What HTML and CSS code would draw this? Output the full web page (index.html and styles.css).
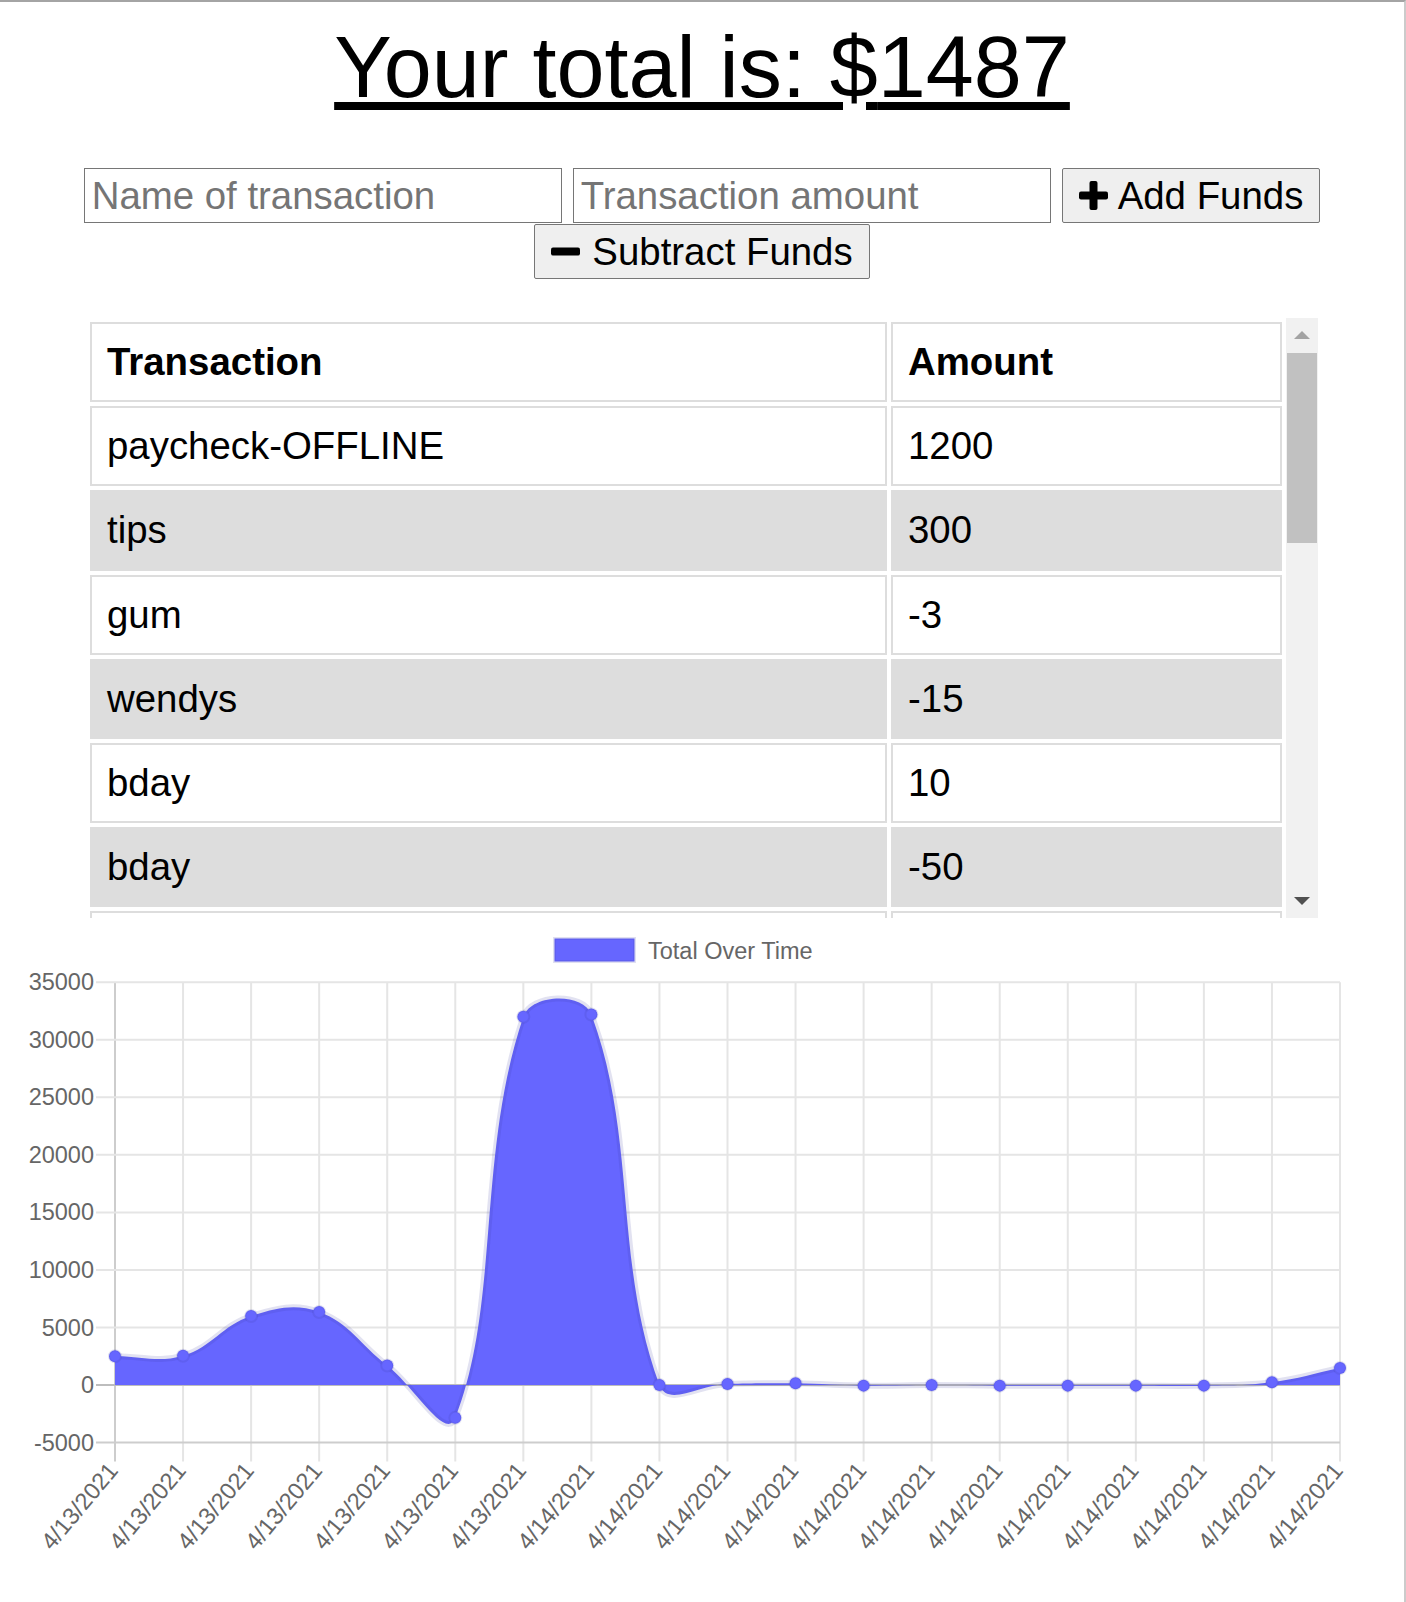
FILE: index.html
```html
<!DOCTYPE html>
<html lang="en">
<head>
<meta charset="utf-8">
<title>Budget Tracker</title>
<link rel="stylesheet" href="styles.css">
</head>
<body>
<h1 class="total">Your total is: $<span id="total">1487</span></h1>

<form class="entry">
  <input class="field" type="text" placeholder="Name of transaction">
  <input class="field" type="number" placeholder="Transaction amount">
  <button class="btn" type="button"><svg class="ico" viewBox="0 0 29 29" aria-hidden="true"><rect x="10.5" y="0" width="8" height="29" rx="2"/><rect x="0" y="10.5" width="29" height="8" rx="2"/></svg>Add Funds</button>
  <button class="btn btn-sub" type="button"><svg class="ico" viewBox="0 0 29 29" aria-hidden="true"><rect x="0" y="10.5" width="29" height="8" rx="2"/></svg>Subtract Funds</button>
</form>

<div class="ledger">
  <div class="ledger-view">
    <table class="tx">
      <thead>
        <tr><th class="col-name">Transaction</th><th>Amount</th></tr>
      </thead>
      <tbody>
        <tr><td>paycheck-OFFLINE</td><td>1200</td></tr>
        <tr><td>tips</td><td>300</td></tr>
        <tr><td>gum</td><td>-3</td></tr>
        <tr><td>wendys</td><td>-15</td></tr>
        <tr><td>bday</td><td>10</td></tr>
        <tr><td>bday</td><td>-50</td></tr>
        <tr><td>&nbsp;</td><td>&nbsp;</td></tr>
      </tbody>
    </table>
  </div>
  <div class="scrollbar" aria-hidden="true">
    <div class="sb-btn sb-up"></div>
    <div class="sb-track"><div class="sb-thumb"></div></div>
    <div class="sb-btn sb-down"></div>
  </div>
</div>

<div class="chart-wrap">
  <svg id="chart" class="chart" width="1388" height="660" viewBox="8 918 1388 660">
    <g id="plot"></g>
    <g class="legend">
      <rect class="legend-box" x="554.5" y="938.5" width="80" height="23"/>
      <text class="legend-label" x="648" y="950.5">Total Over Time</text>
    </g>
  </svg>
</div>

<script src="script.js"></script>
</body>
</html>
```

FILE: styles.css
```css
html {
  border-top: 2px solid #a4a4a4;
  border-right: 2px solid #cbcbcb;
  min-height: 100%;
  box-sizing: border-box;
  background: #fff;
}

body {
  margin: 8px;
  font-family: "Liberation Sans", Arial, Helvetica, sans-serif;
  color: #000;
}

.total {
  margin: 8px 0 51px;
  font-size: 86.3px;
  font-weight: 400;
  line-height: 99px;
  text-align: center;
  text-decoration: underline;
}

.entry {
  display: flex;
  flex-wrap: wrap;
  justify-content: center;
  gap: 1px 11px;
  margin: 0;
}

.field {
  width: 478px;
  height: 55px;
  box-sizing: border-box;
  margin: 0;
  padding: 0 7px;
  border: 1px solid #767676;
  border-radius: 0;
  background: #fff;
  color: #000;
  font-family: "Liberation Sans", Arial, Helvetica, sans-serif;
  font-size: 38.4px;
}

.field::placeholder {
  color: #757575;
}

.btn {
  display: inline-flex;
  align-items: center;
  gap: 10px;
  height: 55px;
  box-sizing: border-box;
  margin: 0;
  padding: 0 16px;
  border: 1px solid #767676;
  border-radius: 2px;
  background: #efefef;
  color: #000;
  font-family: "Liberation Sans", Arial, Helvetica, sans-serif;
  font-size: 38.4px;
  white-space: nowrap;
}

.btn-sub {
  gap: 12px;
}

.ico {
  width: 29px;
  height: 29px;
  flex: none;
  fill: #000;
}

.ledger {
  display: flex;
  width: 1232px;
  height: 600px;
  margin: 39px auto 0;
}

.ledger-view {
  flex: 1;
  overflow: hidden;
}

.tx {
  width: 100%;
  table-layout: fixed;
  border-collapse: separate;
  border-spacing: 4px;
}

.tx th,
.tx td {
  padding: 16px 16px 16px 15px;
  border: 2px solid #dddddd;
  font-size: 38.4px;
  line-height: 44.2px;
  text-align: left;
}

.tx th {
  font-weight: 700;
}

.col-name {
  width: 762px;
}

.tx tbody tr:nth-child(even) td {
  background: #dddddd;
}

.scrollbar {
  display: flex;
  flex-direction: column;
  width: 32px;
  flex: none;
  background: #f1f1f1;
}

.sb-btn {
  display: flex;
  align-items: center;
  justify-content: center;
  height: 34px;
  flex: none;
}

.sb-up::before {
  content: "";
  border-left: 8px solid transparent;
  border-right: 8px solid transparent;
  border-bottom: 8px solid #a3a3a3;
}

.sb-down::before {
  content: "";
  border-left: 8px solid transparent;
  border-right: 8px solid transparent;
  border-top: 8px solid #505050;
}

.sb-track {
  flex: 1;
}

.sb-thumb {
  height: 190px;
  margin: 1px 1px 0;
  background: #c1c1c1;
}

.chart-wrap {
  width: 1388px;
}

.chart {
  display: block;
}

.chart text {
  font-family: "Liberation Sans", Arial, Helvetica, sans-serif;
  font-size: 23.5px;
  fill: #666666;
}

.ytick {
  text-anchor: end;
  dominant-baseline: central;
}

.xtick {
  text-anchor: end;
  dominant-baseline: central;
}

.legend-label {
  dominant-baseline: central;
}

.legend-box {
  fill: #6666ff;
  stroke: rgba(60, 60, 160, 0.16);
  stroke-width: 3;
}

.grid line {
  stroke-width: 2;
}

.grid .line {
  stroke: #e5e5e5;
}

.grid .axis {
  stroke: #cdcdcd;
}

.grid .zero {
  stroke: #bdbdbd;
}

.area {
  fill: #6666ff;
  stroke: none;
}

.curve {
  fill: none;
  stroke: rgba(60, 60, 160, 0.15);
  stroke-width: 6;
}

.dot {
  fill: #6666ff;
  stroke: rgba(60, 60, 160, 0.15);
  stroke-width: 2;
}
```

FILE: script.js
```js
(function () {
  var NS = 'http://www.w3.org/2000/svg';
  var plot = document.getElementById('plot');
  if (!plot) return;

  var labels = [];
  var i;
  for (i = 0; i < 7; i++) labels.push('4/13/2021');
  for (i = 0; i < 12; i++) labels.push('4/14/2021');

  var data = [2500, 2550, 6000, 6350, 1700, -2850, 32000, 32200, 0, 100, 150, -50, 0, -50, -50, -50, -50, 250, 1487];

  var area = { left: 115, right: 1340, top: 982.2, bottom: 1442.6 };
  var max = 35000, min = -5000, step = 5000;

  function yOf(v) { return area.top + (max - v) / (max - min) * (area.bottom - area.top); }
  function xOf(n) { return area.left + n * (area.right - area.left) / (data.length - 1); }

  function make(name, attrs, parent) {
    var node = document.createElementNS(NS, name);
    for (var k in attrs) node.setAttribute(k, attrs[k]);
    (parent || plot).appendChild(node);
    return node;
  }

  var grid = make('g', { 'class': 'grid' });

  for (i = 0; i < data.length; i++) {
    var x = xOf(i);
    make('line', { x1: x, x2: x, y1: area.top, y2: area.bottom + 19, 'class': i === 0 ? 'axis' : 'line' }, grid);
  }

  for (var v = min; v <= max; v += step) {
    var y = yOf(v);
    var cls = v === 0 ? 'zero' : (v === min ? 'axis' : 'line');
    make('line', { x1: 96, x2: area.right, y1: y, y2: y, 'class': cls }, grid);
    var t = make('text', { x: 94, y: y, 'class': 'ytick' });
    t.textContent = String(v);
  }

  for (i = 0; i < labels.length; i++) {
    var lx = xOf(i) - 2, ly = 1466;
    var lt = make('text', { x: lx, y: ly, 'class': 'xtick', transform: 'rotate(-50 ' + lx + ' ' + ly + ')' });
    lt.textContent = labels[i];
  }

  function clamp(val, lo, hi) { return Math.max(lo, Math.min(hi, val)); }

  var pts = data.map(function (val, n) { return { x: xOf(n), y: yOf(val) }; });
  var tension = 0.4;
  pts.forEach(function (p, n) {
    var prev = pts[n - 1] || p;
    var next = pts[n + 1] || p;
    var d01 = Math.sqrt(Math.pow(p.x - prev.x, 2) + Math.pow(p.y - prev.y, 2));
    var d12 = Math.sqrt(Math.pow(next.x - p.x, 2) + Math.pow(next.y - p.y, 2));
    var s01 = d01 / (d01 + d12) || 0;
    var s12 = d12 / (d01 + d12) || 0;
    var fa = tension * s01, fb = tension * s12;
    p.px = clamp(p.x - fa * (next.x - prev.x), area.left, area.right);
    p.py = clamp(p.y - fa * (next.y - prev.y), area.top, area.bottom);
    p.nx = clamp(p.x + fb * (next.x - prev.x), area.left, area.right);
    p.ny = clamp(p.y + fb * (next.y - prev.y), area.top, area.bottom);
  });

  var d = 'M' + pts[0].x + ' ' + pts[0].y;
  for (i = 1; i < pts.length; i++) {
    var a = pts[i - 1], b = pts[i];
    d += ' C' + a.nx + ' ' + a.ny + ' ' + b.px + ' ' + b.py + ' ' + b.x + ' ' + b.y;
  }
  var y0 = yOf(0);
  var last = pts[pts.length - 1];
  make('path', { d: d + ' L' + last.x + ' ' + y0 + ' L' + pts[0].x + ' ' + y0 + ' Z', 'class': 'area' });
  make('path', { d: d, 'class': 'curve' });

  pts.forEach(function (p) {
    make('circle', { cx: p.x, cy: p.y, r: 6, 'class': 'dot' });
  });
})();
```
